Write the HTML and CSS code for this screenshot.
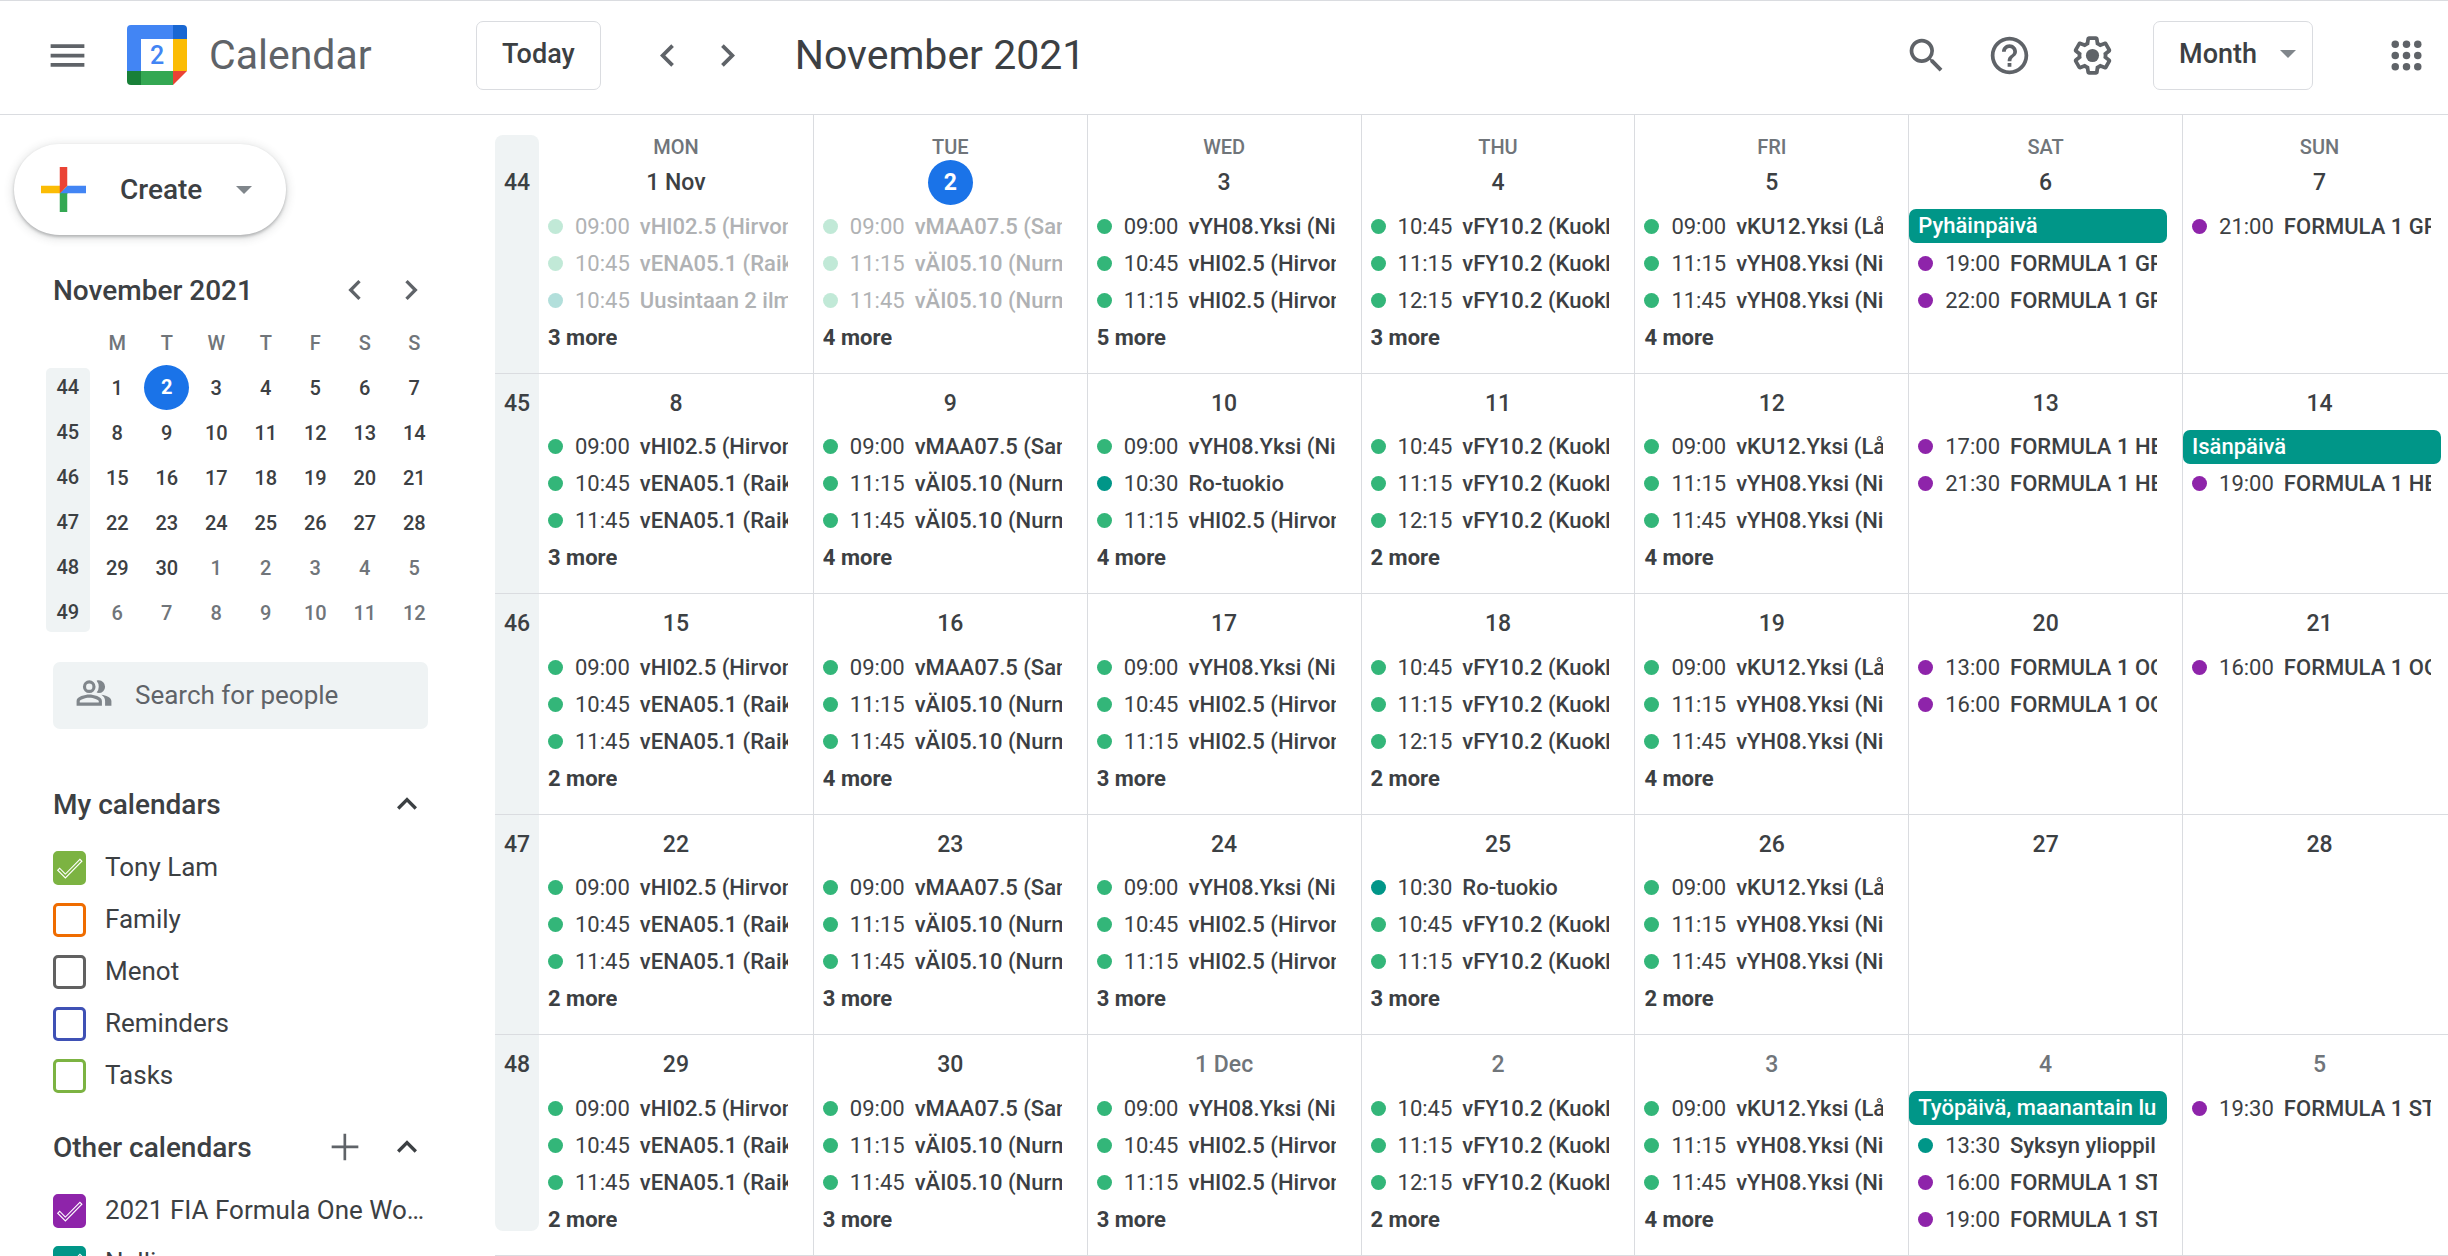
FILE: index.html
```html
<!DOCTYPE html>
<html lang="en">
<head>
<meta charset="utf-8">
<title>Calendar - November 2021</title>
<link rel="stylesheet" href="styles.css">
</head>
<body>
<header class="topbar">
  <button class="icon-btn menu-btn" aria-label="Main menu"><svg class="icon" viewBox="0 0 24 24"><path d="M3 18h18v-2H3v2zm0-5h18v-2H3v2zm0-7v2h18V6H3z"/></svg></button>
  <svg class="logo" viewBox="0 0 60 60" aria-hidden="true">
    <path fill="#fff" d="M14 14h32v32H14z"/>
    <path fill="#4285f4" d="M4 0h42v14H14v32H0V4a4 4 0 0 1 4-4z"/>
    <path fill="#1967d2" d="M46 0h10a4 4 0 0 1 4 4v10H46z"/>
    <path fill="#fbbc04" d="M46 14h14v32H46z"/>
    <path fill="#34a853" d="M14 46h32v14H14z"/>
    <path fill="#188038" d="M0 46h14v14H4a4 4 0 0 1-4-4z"/>
    <path fill="#ea4335" d="M46 46h14L46 60z"/>
    <text class="logo-day" x="30" y="39" text-anchor="middle">2</text>
  </svg>
  <span class="brand">Calendar</span>
  <button class="outline-btn">Today</button>
  <div class="pager">
    <button class="icon-btn" aria-label="Previous month"><svg class="icon" viewBox="0 0 24 24"><path d="M15.41 7.41L14 6l-6 6 6 6 1.41-1.41L10.83 12z"/></svg></button>
    <button class="icon-btn" aria-label="Next month"><svg class="icon" viewBox="0 0 24 24"><path d="M10 6L8.59 7.41 13.17 12l-4.58 4.59L10 18l6-6z"/></svg></button>
  </div>
  <h1 class="month-title">November 2021</h1>
  <div class="tools">
    <button class="icon-btn" aria-label="Search"><svg class="icon" viewBox="0 0 24 24"><path d="M15.5 14h-.79l-.28-.27A6.47 6.47 0 0 0 16 9.5 6.5 6.5 0 1 0 9.500 16c1.610 0 3.090-.59 4.230-1.570l.27.280v.79l5 4.990L20.490 19l-4.990-5zm-6 0C7.010 14 5 11.990 5 9.500S7.010 5 9.500 5 14 7.010 14 9.500 11.990 14 9.500 14z"/></svg></button>
    <button class="icon-btn" aria-label="Support"><svg class="icon" viewBox="0 0 24 24"><path d="M11 18h2v-2h-2v2zm1-16C6.480 2 2 6.480 2 12s4.480 10 10 10 10-4.480 10-10S17.520 2 12 2zm0 18c-4.410 0-8-3.590-8-8s3.590-8 8-8 8 3.590 8 8-3.590 8-8 8zm0-14c-2.210 0-4 1.790-4 4h2c0-1.100.9-2 2-2s2 .9 2 2c0 2-3 1.750-3 5h2c0-2.250 3-2.500 3-5 0-2.210-1.790-4-4-4z"/></svg></button>
    <button class="icon-btn" aria-label="Settings"><svg class="icon" viewBox="0 0 24 24"><path d="M13.850 22.250h-3.700c-.74 0-1.360-.54-1.450-1.270l-.27-1.890c-.27-.14-.53-.29-.79-.46l-1.800.72c-.7.260-1.470-.03-1.810-.65L2.200 15.530c-.35-.66-.2-1.440.36-1.880l1.530-1.190c-.01-.15-.02-.3-.02-.46 0-.15.010-.31.020-.46l-1.520-1.190c-.59-.45-.74-1.260-.37-1.880l1.850-3.190c.34-.62 1.110-.9 1.790-.63l1.810.73c.26-.17.52-.32.780-.46l.27-1.910c.09-.7.710-1.250 1.440-1.250h3.700c.74 0 1.360.54 1.450 1.270l.27 1.890c.27.140.53.290.79.460l1.800-.72c.71-.26 1.480.03 1.820.65l1.840 3.180c.36.660.2 1.440-.36 1.880l-1.520 1.190c.01.150.02.3.020.460s-.01.310-.02.460l1.520 1.190c.56.450.72 1.230.37 1.860l-1.860 3.220c-.34.620-1.110.9-1.800.63l-1.800-.72c-.26.170-.52.320-.78.460l-.27 1.910c-.1.680-.72 1.220-1.460 1.220zm-3.230-2h2.760l.37-2.550.53-.22c.44-.18.88-.44 1.340-.78l.45-.34 2.380.96 1.380-2.400-2.030-1.580.07-.56c.03-.26.060-.51.060-.78s-.03-.53-.06-.78l-.07-.56 2.030-1.580-1.390-2.400-2.390.96-.45-.35c-.42-.32-.87-.58-1.330-.77l-.52-.22-.37-2.550h-2.760l-.37 2.550-.53.210c-.44.190-.88.440-1.340.79l-.45.330-2.380-.95-1.390 2.390 2.030 1.580-.07.560a7 7 0 0 0-.06.790c0 .26.020.530.060.78l.07.560-2.030 1.580 1.380 2.400 2.390-.96.450.35c.43.330.86.580 1.330.77l.53.220.38 2.550z"/><circle cx="12" cy="12" r="3.500"/></svg></button>
    <button class="outline-btn view-btn">Month<span class="caret"></span></button>
    <button class="icon-btn apps-btn" aria-label="Google apps"><svg class="icon" viewBox="0 0 24 24"><circle cx="6" cy="6" r="2"/><circle cx="12" cy="6" r="2"/><circle cx="18" cy="6" r="2"/><circle cx="6" cy="12" r="2"/><circle cx="12" cy="12" r="2"/><circle cx="18" cy="12" r="2"/><circle cx="6" cy="18" r="2"/><circle cx="12" cy="18" r="2"/><circle cx="18" cy="18" r="2"/></svg></button>
  </div>
</header>

<div class="workspace">
  <aside class="sidebar">
    <button class="create-btn">
      <svg class="plus-logo" viewBox="6 6 24 24" aria-hidden="true"><path fill="#34a853" d="M16 16v14h4V20z"/><path fill="#4285f4" d="M30 16H20l-4 4h14z"/><path fill="#fbbc05" d="M6 16v4h10l4-4z"/><path fill="#ea4335" d="M20 16V6h-4v14z"/></svg>
      <span>Create</span><span class="caret"></span>
    </button>

    <div class="side-head mini-head">
      <h2 class="side-title">November 2021</h2>
      <button class="icon-btn" aria-label="Previous month"><svg class="icon icon-sm" viewBox="0 0 24 24"><path d="M15.410 7.410L14 6l-6 6 6 6 1.410-1.410L10.830 12z"/></svg></button>
      <button class="icon-btn" aria-label="Next month"><svg class="icon icon-sm" viewBox="0 0 24 24"><path d="M10 6L8.590 7.410 13.170 12l-4.580 4.590L10 18l6-6z"/></svg></button>
    </div>
    <table class="mini">
      <thead><tr><td></td><th>M</th><th>T</th><th>W</th><th>T</th><th>F</th><th>S</th><th>S</th></tr></thead>
      <tbody id="mini-body"></tbody>
    </table>

    <label class="people">
      <svg class="people-icon" viewBox="0 0 24 24" aria-hidden="true"><path fill-rule="evenodd" d="M9 4a4 4 0 1 0 0 8 4 4 0 0 0 0-8zm0 2a2 2 0 1 1 0 4 2 2 0 0 1 0-4z"/><path fill-rule="evenodd" d="M9 13c-2.670 0-8 1.340-8 4v3h16v-3c0-2.660-5.330-4-8-4zm6 5H3v-1c.2-.72 3.300-2 6-2s5.800 1.280 6 2z"/><path d="M15 12a4 4 0 0 0 0-8c-.47 0-.91.100-1.330.240a5.980 5.980 0 0 1 0 7.520c.42.140.86.240 1.330.240zM16.670 13.130C18.040 14.060 19 15.320 19 17v3h4v-3c0-2.180-3.580-3.470-6.330-3.870z"/></svg>
      <input class="people-input" type="text" placeholder="Search for people" aria-label="Search for people">
    </label>

    <div class="side-head">
      <h2 class="side-title">My calendars</h2>
      <button class="icon-btn" aria-label="Collapse my calendars"><svg class="icon icon-sm dark" viewBox="0 0 24 24"><path d="M12 8l-6 6 1.410 1.410L12 10.830l4.590 4.580L18 14z"/></svg></button>
    </div>
    <ul class="cal-list">
      <li><label class="cal"><input class="box green" type="checkbox" checked><span class="cal-name">Tony Lam</span></label></li>
      <li><label class="cal"><input class="box orange" type="checkbox"><span class="cal-name">Family</span></label></li>
      <li><label class="cal"><input class="box gray" type="checkbox"><span class="cal-name">Menot</span></label></li>
      <li><label class="cal"><input class="box blue" type="checkbox"><span class="cal-name">Reminders</span></label></li>
      <li><label class="cal"><input class="box green" type="checkbox"><span class="cal-name">Tasks</span></label></li>
    </ul>

    <div class="side-head">
      <h2 class="side-title">Other calendars</h2>
      <button class="icon-btn" aria-label="Add other calendars"><svg class="icon icon-sm" viewBox="0 0 24 24"><path d="M20 12.700h-7.300V20h-1.600v-7.300H4v-1.600h7.100V4h1.600v7.100H20z"/></svg></button>
      <button class="icon-btn" aria-label="Collapse other calendars"><svg class="icon icon-sm dark" viewBox="0 0 24 24"><path d="M12 8l-6 6 1.410 1.410L12 10.830l4.590 4.580L18 14z"/></svg></button>
    </div>
    <ul class="cal-list">
      <li><label class="cal"><input class="box purple" type="checkbox" checked><span class="cal-name">2021 FIA Formula One World Championship</span></label></li>
      <li><label class="cal"><input class="box teal" type="checkbox" checked><span class="cal-name">Nelli</span></label></li>
    </ul>
  </aside>

  <main class="month">
    <table class="grid">
      <colgroup><col class="week-col"><col span="7"></colgroup>
      <thead><tr><td class="week-cap"></td><th>MON</th><th>TUE</th><th>WED</th><th>THU</th><th>FRI</th><th>SAT</th><th>SUN</th></tr></thead>
      <tbody id="month-body"></tbody>
    </table>
  </main>
</div>
<script src="script.js"></script>
</body>
</html>
```
FILE: styles.css
```css
* { box-sizing: border-box; }

body {
  margin: 0;
  height: 100vh;
  display: flex;
  flex-direction: column;
  overflow: hidden;
  background: #fff;
  color: #3c4043;
  font-family: Roboto, "Liberation Sans", sans-serif;
  font-size: 26px;
}

h1, h2, ul { margin: 0; padding: 0; font-weight: 400; }
ul { list-style: none; }
button, input { font: inherit; color: inherit; }
svg { display: block; flex: none; }

/* Top bar */
.topbar {
  flex: none;
  height: 115px;
  display: flex;
  align-items: center;
  padding: 0 19px 5px 45px;
  border-top: 1px solid #dadce0;
  border-bottom: 1px solid #dadce0;
}
.icon-btn {
  flex: none;
  padding: 0;
  border: 0;
  background: none;
}
.icon { width: 45px; height: 45px; fill: #5f6368; }
.icon-sm { width: 40px; height: 40px; }
.dark { fill: #3c4043; }
.menu-btn { margin-right: 37px; }
.logo { width: 60px; height: 60px; }
.logo-day { font-size: 25px; font-weight: 500; fill: #4285f4; }
.brand { width: 267px; margin-left: 22px; font-size: 41px; color: #5f6368; }
.outline-btn {
  height: 69px;
  padding: 0 25px 3px;
  border: 1px solid #dadce0;
  border-radius: 7px;
  background: #fff;
  font-size: 27px;
  font-weight: 500;
}
.pager { display: flex; gap: 15px; margin: 0 45px 0 44px; }
.month-title { font-size: 41px; }
.tools { display: flex; align-items: center; gap: 38px; margin-left: auto; }
.view-btn { display: flex; align-items: center; gap: 23px; padding-right: 16px; }
.apps-btn { margin-left: 33px; }
.caret {
  border: 8px solid transparent;
  border-top-color: #80868b;
  border-bottom: 0;
}

.workspace { flex: 1; min-height: 0; display: flex; }

/* Sidebar */
.sidebar { flex: none; width: 495px; padding: 29px 68px 0 14px; overflow: hidden; }
.create-btn {
  display: flex;
  align-items: center;
  height: 91px;
  width: 272px;
  padding: 0 34px 0 27px;
  border: 0;
  border-radius: 46px;
  background: #fff;
  box-shadow: 0 2px 3px rgba(60, 64, 67, .3), 0 2px 8px 2px rgba(60, 64, 67, .15);
  font-size: 28px;
  font-weight: 500;
}
.plus-logo { width: 45px; height: 45px; margin-right: 34px; }
.create-btn .caret { margin-left: auto; }
.side-head { display: flex; align-items: center; gap: 22px; height: 44px; padding-left: 39px; }
.side-title { flex: 1; font-size: 28px; font-weight: 500; }
.mini-head { gap: 16px; margin: 33px -4px 0 0; }

.mini {
  width: 396px;
  margin: 8px 0 0 29px;
  table-layout: fixed;
  border-collapse: collapse;
  font-size: 20px;
  font-weight: 500;
  text-align: center;
}
.mini th, .mini td { height: 45px; padding: 0; font-weight: 500; }
.mini thead th { color: #70757a; }
.mini .outside { color: #70757a; }
.mini .week-cell { padding: 0 3px; }
.week-num { display: block; height: 45px; line-height: 45px; background: #eff3f4; }
.mini tr:first-child .week-num { height: 42px; margin-top: 3px; line-height: 39px; border-radius: 5px 5px 0 0; }
.mini tr:last-child .week-num { height: 42px; margin-bottom: 3px; line-height: 45px; border-radius: 0 0 5px 5px; }
.today {
  display: block;
  width: 45px;
  height: 45px;
  margin: 0 auto;
  border-radius: 50%;
  background: #1a73e8;
  color: #fff;
  line-height: 45px;
  font-weight: 700;
}

.people {
  display: flex;
  align-items: center;
  gap: 22px;
  height: 67px;
  margin: 27px 0 53px 39px;
  padding: 0 22px;
  width: 375px;
  border-radius: 7px;
  background: #eff3f4;
}
.people-icon { width: 38px; height: 38px; margin-bottom: 6px; fill: #80868b; }
.people-input { flex: 1; min-width: 0; padding: 0 0 2px; border: 0; outline: 0; background: none; }
.people-input::placeholder { color: #5f6368; opacity: 1; }

.cal-list { padding: 16px 0 23px 39px; }
.cal { display: flex; align-items: center; gap: 19px; height: 52px; }
.cal-name { padding-bottom: 2px; overflow: hidden; white-space: nowrap; text-overflow: ellipsis; }
.box {
  appearance: none;
  flex: none;
  width: 33px;
  height: 34px;
  margin: 0;
  border: 3px solid;
  border-radius: 5px;
}
.box:checked {
  background: currentColor url("data:image/svg+xml,%3Csvg xmlns='http://www.w3.org/2000/svg' viewBox='0 0 24 24'%3E%3Cpath fill='none' stroke='white' stroke-width='.8' d='M9 16.170L4.830 12l-1.420 1.410L9 19 21 7l-1.410-1.410z'/%3E%3C/svg%3E") center / 33px 33px no-repeat border-box;
}
.green { color: #7cb342; }
.orange { color: #ef6c00; }
.gray { color: #616161; }
.blue { color: #3f51b5; }
.purple { color: #8e24aa; }
.teal { color: #009688; }

/* Month grid: the last column runs slightly past the window edge */
.month { flex: 1; min-width: 0; margin-right: -8px; }
.grid {
  width: 100%;
  height: 100%;
  table-layout: fixed;
  border-collapse: separate;
  border-spacing: 0;
}
.week-col { width: 44px; }
.grid thead th, .grid thead td {
  height: 38px;
  padding: 0;
  vertical-align: bottom;
  line-height: 12px;
  font-size: 20px;
  font-weight: 500;
  color: #70757a;
}
.grid th + th, .grid td + td { border-left: 1px solid #dadce0; }
.grid tbody th, .grid tbody td {
  padding: 0;
  vertical-align: top;
  border-bottom: 1px solid #dadce0;
  overflow: hidden;
}
.week-cap, .grid .week { position: relative; }
.week-cap::before, .grid .week::before {
  content: "";
  position: absolute;
  z-index: -1;
  inset: 0;
  background: #eff3f4;
}
.week-cap::before { top: 20px; border-radius: 8px 8px 0 0; }
.grid tr:last-child .week::before { bottom: 24px; border-radius: 0 0 8px 8px; }
.date {
  height: 45px;
  margin: 7px 0 4px;
  line-height: 45px;
  text-align: center;
  font-size: 23px;
  font-weight: 500;
}
.date.outside { color: #70757a; }
.event, .more {
  display: flex;
  align-items: center;
  height: 34px;
  margin: 0 25px 3px 9px;
  overflow: hidden;
  white-space: nowrap;
  font-size: 22px;
}
.dot { flex: none; width: 15px; height: 15px; margin-right: 12px; border-radius: 50%; background: currentColor; }
.dot.sea { color: #33b679; }
.time { margin-right: 10px; }
.name { font-weight: 500; }
.past .dot { opacity: .3; }
.past { color: #b0b2b4; }
.more { padding: 0; border: 0; background: none; font-weight: 700; }
.banner {
  height: 34px;
  margin: 0 15px 3px 0;
  padding: 0 9px;
  border-radius: 7px;
  background: #009688;
  color: #fff;
  line-height: 34px;
  font-size: 22px;
  font-weight: 500;
}
.banner span { display: block; overflow: hidden; white-space: nowrap; }
```
FILE: script.js
```js
const ev = (time, name, color = "sea") => ({ time, name, color });
const f1 = (time, name) => ev(time, "FORMULA 1 " + name, "purple");
const all = (name) => ({ banner: name });

const HI = "vHI02.5 (Hirvon", ENA = "vENA05.1 (Raik", MAA = "vMAA07.5 (San";
const AI = "vÄI05.10 (Nurm", YH = "vYH08.Yksi (Ni", FY = "vFY10.2 (Kuokk", KU = "vKU12.Yksi (Lå";

const mon = [ev("09:00", HI), ev("10:45", ENA), ev("11:45", ENA)];
const tue = [ev("09:00", MAA), ev("11:15", AI), ev("11:45", AI)];
const wed = [ev("09:00", YH), ev("10:45", HI), ev("11:15", HI)];
const thu = [ev("10:45", FY), ev("11:15", FY), ev("12:15", FY)];
const fri = [ev("09:00", KU), ev("11:15", YH), ev("11:45", YH)];

// Each day: [label, events, hidden event count]
const weeks = [
  [44, [
    ["1 Nov", [ev("09:00", HI), ev("10:45", ENA), ev("10:45", "Uusintaan 2 ilm", "teal")], 3],
    ["2", tue, 4], ["3", wed, 5], ["4", thu, 3], ["5", fri, 4],
    ["6", [all("Pyhäinpäivä"), f1("19:00", "GR"), f1("22:00", "GR")], 0],
    ["7", [f1("21:00", "GR")], 0]]],
  [45, [
    ["8", mon, 3], ["9", tue, 4],
    ["10", [ev("09:00", YH), ev("10:30", "Ro-tuokio", "teal"), ev("11:15", HI)], 4],
    ["11", thu, 2], ["12", fri, 4],
    ["13", [f1("17:00", "HE"), f1("21:30", "HE")], 0],
    ["14", [all("Isänpäivä"), f1("19:00", "HE")], 0]]],
  [46, [
    ["15", mon, 2], ["16", tue, 4], ["17", wed, 3], ["18", thu, 2], ["19", fri, 4],
    ["20", [f1("13:00", "OO"), f1("16:00", "OO")], 0],
    ["21", [f1("16:00", "OO")], 0]]],
  [47, [
    ["22", mon, 2], ["23", tue, 3], ["24", wed, 3],
    ["25", [ev("10:30", "Ro-tuokio", "teal"), ev("10:45", FY), ev("11:15", FY)], 3],
    ["26", fri, 2], ["27", [], 0], ["28", [], 0]]],
  [48, [
    ["29", mon, 2], ["30", tue, 3], ["1 Dec", wed, 3], ["2", thu, 2], ["3", fri, 4],
    ["4", [all("Työpäivä, maanantain lu"), ev("13:30", "Syksyn ylioppil", "teal"), f1("16:00", "ST"), f1("19:00", "ST")], 0],
    ["5", [f1("19:30", "ST")], 0]]],
];

const eventHtml = (e, past) => e.banner
  ? `<div class="banner"><span>${e.banner}</span></div>`
  : `<div class="event${past ? " past" : ""}"><span class="dot ${e.color}"></span><span class="time">${e.time}</span><span class="name">${e.name}</span></div>`;

document.getElementById("month-body").innerHTML = weeks.map(([num, days], w) =>
  `<tr><th class="week"><div class="date">${num}</div></th>` + days.map(([label, events, hidden], d) => {
    const outside = w === 4 && d > 1 ? " outside" : "";
    const text = w === 0 && d === 1 ? `<span class="today">${label}</span>` : label;
    return `<td><div class="date${outside}">${text}</div>` +
      events.map((e) => eventHtml(e, w === 0 && d < 2)).join("") +
      (hidden ? `<button class="more">${hidden} more</button>` : "") + "</td>";
  }).join("") + "</tr>").join("");

document.getElementById("mini-body").innerHTML = [0, 1, 2, 3, 4, 5].map((w) => {
  let row = `<tr><th class="week-cell"><span class="week-num">${44 + w}</span></th>`;
  for (let d = 1; d <= 7; d++) {
    const n = w * 7 + d;
    row += n === 2 ? '<td><span class="today">2</span></td>'
      : n > 30 ? `<td class="outside">${n - 30}</td>` : `<td>${n}</td>`;
  }
  return row + "</tr>";
}).join("");
```
